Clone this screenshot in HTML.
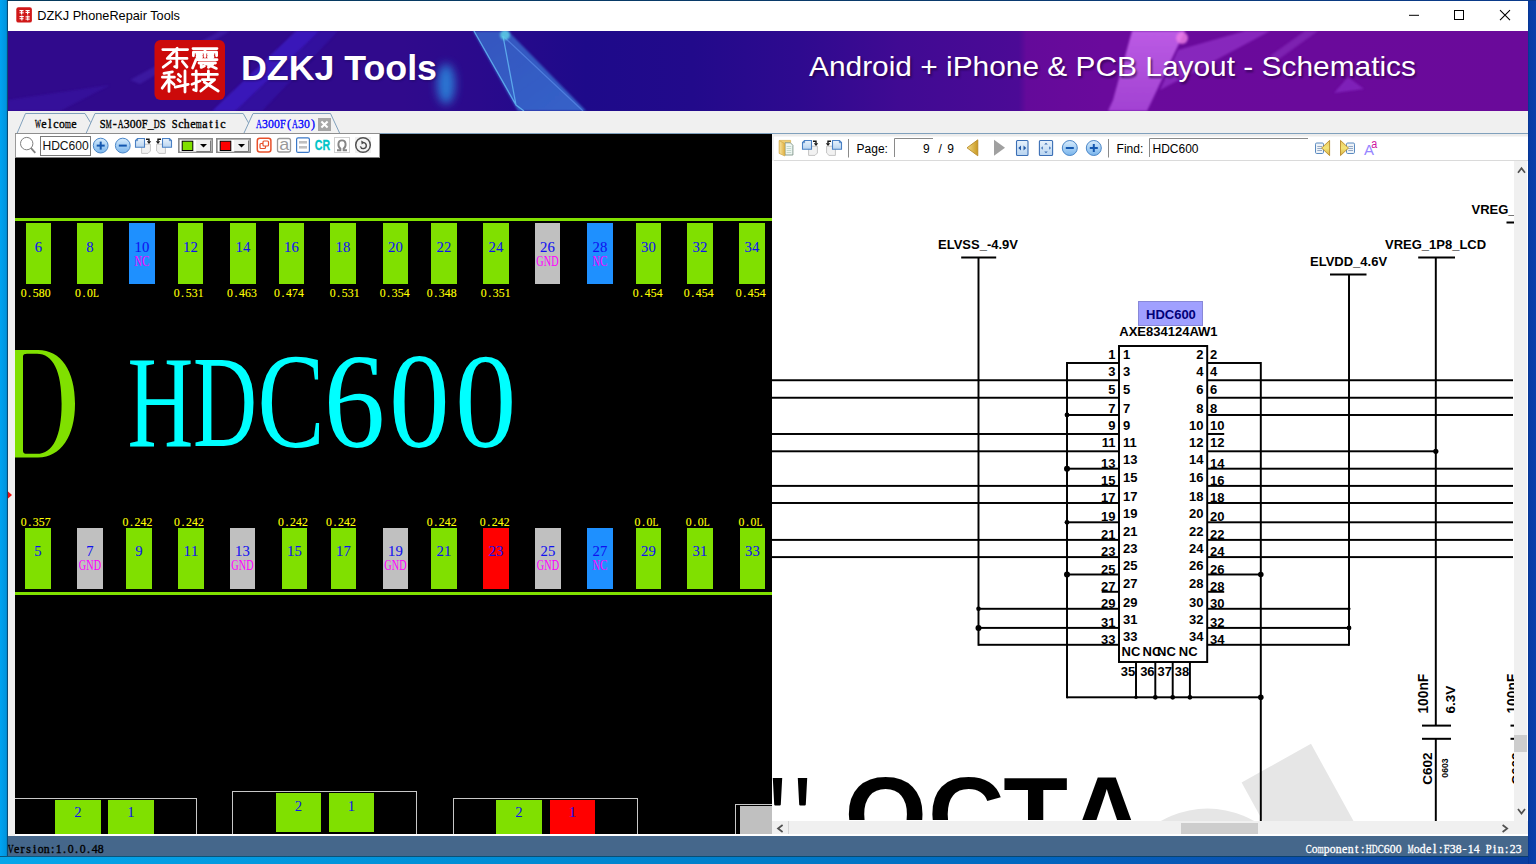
<!DOCTYPE html>
<html><head><meta charset="utf-8"><title>DZKJ</title><style>
*{box-sizing:border-box;margin:0;padding:0}
html,body{width:1536px;height:864px;overflow:hidden}
body{position:relative;background:#0a9be0;font-family:"Liberation Sans",sans-serif;}
.abs{position:absolute}
#desk-l{left:0;top:0;width:8px;height:864px;background:linear-gradient(90deg,#00a4f2 0%,#0094de 80%,#0a4a74 90%,#0a4a74 100%)}
#desk-b{left:0;top:856px;width:1536px;height:8px;background:linear-gradient(180deg,rgba(10,60,90,.75) 0,rgba(10,60,90,.75) 1.2px,rgba(0,0,0,0) 1.3px),linear-gradient(90deg,#06a6ea 0%,#008cd4 33%,#007cc8 50%,#0068c0 66%,#0a50b0 83%,#0a3ea0 100%)}
#desk-r{left:1528px;top:0;width:8px;height:864px;background:linear-gradient(90deg,#06348e 0,#083ca4 1.5px,#0a40ac 100%)}
#desk-t{left:7px;top:0;width:1529px;height:1px;background:linear-gradient(90deg,#043a5c 0%,#0a3a6c 60%,#0a3a8c 100%)}
#win{left:8px;top:1px;width:1520px;height:855.3px;background:#f0f0f0;overflow:hidden}
#title{left:0;top:0;width:1520px;height:30px;background:#fff}
#banner{left:0;top:30px;width:1520px;height:80px;background:linear-gradient(90deg,#300a8c 0%,#300a8c 26%,#2a0a8c 31%,#1e0a8a 38%,#220a8b 45%,#2e0a8f 52%,#400a93 58.7%,#4c0a96 66.5%,#640a9a 67%,#6a0a9c 72%,#6a0a9a 100%);overflow:hidden}
#tabs{left:0;top:110px;width:1520px;height:23px;background:#f0f0f0}
#lpane{left:7px;top:133px;width:757px;height:700px;background:#000;overflow:hidden}
#rpane{left:764px;top:133px;width:756px;height:700px;background:#fff;overflow:hidden}
#wline{left:7px;top:833px;width:1513px;height:2.4px;background:#fff}
#status{left:0;top:835.3px;width:1520px;height:20px;background:#45678b}
.sim{font-family:"Liberation Mono",monospace;white-space:pre;transform-origin:0 0;display:block;position:absolute}
</style></head><body>
<div id="desk-l" class="abs"></div><div id="desk-b" class="abs"></div><div id="desk-r" class="abs"></div><div id="desk-t" class="abs"></div>
<div id="win" class="abs">
<div id="title" class="abs"><svg class="abs" style="left:0;top:0" width="1520" height="30" viewBox="8 1 1520 30">
<rect x="16.3" y="7.2" width="15.6" height="15.4" rx="2.2" fill="#d01818"/>
<g fill="#fff"><rect x="19.5" y="10" width="4" height="1.2"/><rect x="21" y="10" width="1.2" height="4.5"/><rect x="19.5" y="12.3" width="4.3" height="1"/><rect x="25.5" y="10" width="4.2" height="1.2"/><rect x="25.5" y="12" width="4.2" height="1"/><rect x="27" y="10" width="1.2" height="4.5"/><rect x="19.5" y="16" width="4.3" height="1.1"/><rect x="21.3" y="15.5" width="1.1" height="5"/><rect x="19.5" y="18.2" width="4" height="1"/><rect x="25.5" y="16.3" width="4.3" height="1.1"/><rect x="27.2" y="15.5" width="1.1" height="5"/><rect x="25.5" y="18.6" width="4.3" height="1"/></g>
<text x="37.3" y="20.2" font-family="Liberation Sans" font-size="12.6" fill="#000" textLength="142.6" lengthAdjust="spacingAndGlyphs">DZKJ PhoneRepair Tools</text>
<rect x="1409" y="14.8" width="10" height="1" fill="#000"/>
<rect x="1454.5" y="10.5" width="9" height="9" fill="none" stroke="#000" stroke-width="1"/>
<path d="M1500 10.2 L1510 20.2 M1510 10.2 L1500 20.2" stroke="#000" stroke-width="1.1" fill="none"/>
</svg></div>
<div id="banner" class="abs"><svg class="abs" style="left:0;top:0" width="1520" height="80" viewBox="8 31 1520 80">
<defs><filter id="bl" x="-50%" y="-50%" width="200%" height="200%"><feGaussianBlur stdDeviation="5"/></filter><filter id="bl2" x="-50%" y="-50%" width="200%" height="200%"><feGaussianBlur stdDeviation="1.2"/></filter><linearGradient id="lg1" x1="0" y1="0" x2="1" y2="1"><stop offset="0" stop-color="#3a6fd0" stop-opacity="0.75"/><stop offset="1" stop-color="#3a78d8" stop-opacity="0.8"/></linearGradient><linearGradient id="lg2" x1="0" y1="0" x2="0" y2="1"><stop offset="0" stop-color="#c060e8" stop-opacity="0.95"/><stop offset="1" stop-color="#b050e0" stop-opacity="0.8"/></linearGradient></defs>
<polygon points="8,111 60,111 110,85 8,100" fill="#3a18a8" opacity="0.5" filter="url(#bl2)"/>
<polygon points="130,80 220,31 230,31 140,84" fill="#4a2ab8" opacity="0.45" filter="url(#bl2)"/>
<polygon points="212,111 236,111 320,31 296,31" fill="#3c1ec8" opacity="0.75" filter="url(#bl2)"/>
<polygon points="236,111 262,111 338,31 320,31" fill="#3414b0" opacity="0.5" filter="url(#bl2)"/>
<ellipse cx="446" cy="84" rx="9" ry="20" fill="#2a8ae0" opacity="0.85" filter="url(#bl)"/>
<polygon points="473,31 508,31 586,111 518,111" fill="url(#lg1)" filter="url(#bl2)"/>
<path d="M474 31 L516 105 L524 111 M503 36 L516 105" stroke="#5fb0f0" stroke-width="1.3" fill="none" opacity="0.9"/>
<path d="M503 36 L583 111" stroke="#5a8ae8" stroke-width="1.2" fill="none" opacity="0.7"/>
<circle cx="505" cy="35" r="5" fill="#60d8e8" opacity="0.8" filter="url(#bl2)"/>
<polygon points="1132,31 1185,31 1147,111 1108,111 1113,100" fill="url(#lg2)" filter="url(#bl2)"/>
<polygon points="1178,50 1245,31 1270,31 1160,90" fill="#a040d8" opacity="0.55" filter="url(#bl2)"/>
<polygon points="1270,56 1305,31 1318,31 1275,62" fill="#8a30c0" opacity="0.6" filter="url(#bl2)"/>
<polygon points="1334,93 1348,77 1364,89" fill="#8428c0" opacity="0.8" filter="url(#bl2)"/>
<circle cx="1182" cy="38" r="6" fill="#f080e8" opacity="0.8" filter="url(#bl2)"/>
<rect x="154.5" y="40" width="70.5" height="60" rx="6" fill="#cc0a0a"/>
<path d="M162.8 49.6 H187.6 M177.2 48.2 L167.3 58.4 H187 M176.8 52.5 V67.6 L174.6 66.6 M170.6 61.6 L163.2 67.2 M182.4 61.4 L187 67 M193 48.6 H217 M205 48.6 V56.6 M193.4 55.8 V52.2 H216.6 V55.8 M197 54.6 H201.6 M208.4 54.6 H213 M197 56.9 H201.6 M208.4 56.9 H213 M196 59.7 H217 M196 59.7 L192.6 68 M199 63 H215.5 M201.2 63 V67.4 L204.4 66 M205.6 63.4 L216.4 68.4 M212.6 64.6 L208.4 67.2 M164 73.4 L172.4 71.8 M162.4 77.2 H174.4 M169 72.6 V91.4 M168.8 79.2 L162.2 88.2 M169.6 80.4 L174 84.6 M178.4 74.2 L180.6 76.4 M178 79.4 L180.2 81.6 M175.2 87.2 L188.2 84.4 M185 71 V92 M192.4 74.4 H199.6 M196.2 71 V90.8 L193.6 89.8 M192 84.2 L200 81 M201.4 74.4 H217.4 M208.4 71 V79.4 M202.4 79.6 H214.6 L200.8 91 M204.2 82 L218.2 91" stroke="#fff" stroke-width="2.8" stroke-linecap="round" stroke-linejoin="round" fill="none"/>
<text x="242" y="81" font-family="Liberation Sans" font-weight="bold" font-size="35" fill="#1a0a50" opacity="0.6" textLength="196" lengthAdjust="spacingAndGlyphs" filter="url(#bl2)">DZKJ Tools</text>
<text x="241" y="80" font-family="Liberation Sans" font-weight="bold" font-size="35" fill="#fff" textLength="196" lengthAdjust="spacingAndGlyphs">DZKJ Tools</text>
<text x="810.5" y="77.5" font-family="Liberation Sans" font-size="28.5" fill="#20063a" opacity="0.7" textLength="607" lengthAdjust="spacingAndGlyphs" filter="url(#bl2)">Android + iPhone &amp; PCB Layout - Schematics</text>
<text x="809" y="76" font-family="Liberation Sans" font-size="28.5" fill="#fff" textLength="607" lengthAdjust="spacingAndGlyphs">Android + iPhone &amp; PCB Layout - Schematics</text>
</svg></div>
<div id="tabs" class="abs"><svg class="abs" style="left:0;top:0" width="1520" height="23" viewBox="8 111 1520 23">
<path d="M15 133.5 H1528" stroke="#80a0bc" stroke-width="1" fill="none"/>
<path d="M17 133.5 L25.5 113.5 H85 L90.5 122.5" stroke="#80a0bc" stroke-width="1" fill="none"/>
<path d="M86 133.5 L95 113.5 H243.2 L248.6 123" stroke="#80a0bc" stroke-width="1" fill="none"/>
<path d="M243.8 133.5 L253 113.5 H330.5 L339.8 133.5" stroke="#80a0bc" stroke-width="1" fill="#f2f2f2"/>
<path d="M15 133.5 H380" stroke="#8e8e8e" stroke-width="1" fill="none"/>
<g font-family="Liberation Serif" font-size="12" fill="#000" stroke="#000" stroke-width="0.35" ><text x="35.06" y="128" textLength="5.88" lengthAdjust="spacingAndGlyphs">W</text><text x="41.34" y="128">e</text><text x="48.33" y="128">l</text><text x="53.34" y="128">c</text><text x="59.06" y="128" textLength="5.88" lengthAdjust="spacingAndGlyphs">o</text><text x="65.06" y="128" textLength="5.88" lengthAdjust="spacingAndGlyphs">m</text><text x="71.34" y="128">e</text></g>
<g font-family="Liberation Serif" font-size="12" fill="#000" stroke="#000" stroke-width="0.35" ><text x="99.86" y="128" textLength="5.88" lengthAdjust="spacingAndGlyphs">S</text><text x="105.86" y="128" textLength="5.88" lengthAdjust="spacingAndGlyphs">M</text><text x="112.80" y="128">-</text><text x="117.86" y="128" textLength="5.88" lengthAdjust="spacingAndGlyphs">A</text><text x="123.86" y="128" textLength="5.88" lengthAdjust="spacingAndGlyphs">3</text><text x="129.86" y="128" textLength="5.88" lengthAdjust="spacingAndGlyphs">0</text><text x="135.86" y="128" textLength="5.88" lengthAdjust="spacingAndGlyphs">0</text><text x="141.86" y="128" textLength="5.88" lengthAdjust="spacingAndGlyphs">F</text><text x="147.86" y="128" textLength="5.88" lengthAdjust="spacingAndGlyphs">_</text><text x="153.86" y="128" textLength="5.88" lengthAdjust="spacingAndGlyphs">D</text><text x="159.86" y="128" textLength="5.88" lengthAdjust="spacingAndGlyphs">S</text><text x="171.86" y="128" textLength="5.88" lengthAdjust="spacingAndGlyphs">S</text><text x="178.14" y="128">c</text><text x="183.86" y="128" textLength="5.88" lengthAdjust="spacingAndGlyphs">h</text><text x="190.14" y="128">e</text><text x="195.86" y="128" textLength="5.88" lengthAdjust="spacingAndGlyphs">m</text><text x="202.14" y="128">a</text><text x="209.13" y="128">t</text><text x="215.13" y="128">i</text><text x="220.14" y="128">c</text></g>
<g font-family="Liberation Serif" font-size="12" fill="#0000ff" stroke="#0000ff" stroke-width="0.3" ><text x="256.06" y="128" textLength="5.88" lengthAdjust="spacingAndGlyphs">A</text><text x="262.06" y="128" textLength="5.88" lengthAdjust="spacingAndGlyphs">3</text><text x="268.06" y="128" textLength="5.88" lengthAdjust="spacingAndGlyphs">0</text><text x="274.06" y="128" textLength="5.88" lengthAdjust="spacingAndGlyphs">0</text><text x="280.06" y="128" textLength="5.88" lengthAdjust="spacingAndGlyphs">F</text><text x="287.00" y="128">(</text><text x="292.06" y="128" textLength="5.88" lengthAdjust="spacingAndGlyphs">A</text><text x="298.06" y="128" textLength="5.88" lengthAdjust="spacingAndGlyphs">3</text><text x="304.06" y="128" textLength="5.88" lengthAdjust="spacingAndGlyphs">0</text><text x="311.00" y="128">)</text></g>
<rect x="318" y="118" width="13" height="13" fill="#a6a6a6"/>
<path d="M321.4 121.6 L327.6 127.6 M327.6 121.6 L321.4 127.6" stroke="#fff" stroke-width="2.1" fill="none"/>
</svg></div>
<div id="lpane" class="abs"><svg class="abs" style="left:0;top:0" width="757" height="701" viewBox="15 134 757 701">
<rect x="15" y="218" width="757" height="3" fill="#80e000"/>
<rect x="15" y="592" width="757" height="3" fill="#80e000"/>
<rect x="26" y="223" width="25" height="61" fill="#80e000"/>
<g font-family="Liberation Serif" font-size="15" fill="#1010f0" stroke="#1010f0" stroke-width="0.08" ><text x="34.83" y="252" textLength="7.35" lengthAdjust="spacingAndGlyphs">6</text></g>
<g font-family="Liberation Serif" font-size="12" fill="#ffff00" stroke="#ffff00" stroke-width="0.12" ><text x="20.66" y="297" textLength="5.88" lengthAdjust="spacingAndGlyphs">0</text><text x="28.10" y="297">.</text><text x="32.66" y="297" textLength="5.88" lengthAdjust="spacingAndGlyphs">5</text><text x="38.66" y="297" textLength="5.88" lengthAdjust="spacingAndGlyphs">8</text><text x="44.66" y="297" textLength="5.88" lengthAdjust="spacingAndGlyphs">0</text></g>
<rect x="77" y="223" width="26" height="61" fill="#80e000"/>
<g font-family="Liberation Serif" font-size="15" fill="#1010f0" stroke="#1010f0" stroke-width="0.08" ><text x="86.33" y="252" textLength="7.35" lengthAdjust="spacingAndGlyphs">8</text></g>
<g font-family="Liberation Serif" font-size="12" fill="#ffff00" stroke="#ffff00" stroke-width="0.12" ><text x="75.06" y="297" textLength="5.88" lengthAdjust="spacingAndGlyphs">0</text><text x="82.50" y="297">.</text><text x="87.06" y="297" textLength="5.88" lengthAdjust="spacingAndGlyphs">0</text><text x="93.06" y="297" textLength="5.88" lengthAdjust="spacingAndGlyphs">L</text></g>
<rect x="129" y="223" width="26" height="61" fill="#1e90ff"/>
<g font-family="Liberation Serif" font-size="15" fill="#1010f0" stroke="#1010f0" stroke-width="0.08" ><text x="134.57" y="252" textLength="7.35" lengthAdjust="spacingAndGlyphs">1</text><text x="142.07" y="252" textLength="7.35" lengthAdjust="spacingAndGlyphs">0</text></g>
<g font-family="Liberation Serif" font-size="15" fill="#ff00ff" stroke="#ff00ff" stroke-width="0.08" ><text x="134.57" y="266" textLength="7.35" lengthAdjust="spacingAndGlyphs">N</text><text x="142.07" y="266" textLength="7.35" lengthAdjust="spacingAndGlyphs">C</text></g>
<rect x="178" y="223" width="25" height="61" fill="#80e000"/>
<g font-family="Liberation Serif" font-size="15" fill="#1010f0" stroke="#1010f0" stroke-width="0.08" ><text x="183.07" y="252" textLength="7.35" lengthAdjust="spacingAndGlyphs">1</text><text x="190.57" y="252" textLength="7.35" lengthAdjust="spacingAndGlyphs">2</text></g>
<g font-family="Liberation Serif" font-size="12" fill="#ffff00" stroke="#ffff00" stroke-width="0.12" ><text x="173.66" y="297" textLength="5.88" lengthAdjust="spacingAndGlyphs">0</text><text x="181.10" y="297">.</text><text x="185.66" y="297" textLength="5.88" lengthAdjust="spacingAndGlyphs">5</text><text x="191.66" y="297" textLength="5.88" lengthAdjust="spacingAndGlyphs">3</text><text x="197.66" y="297" textLength="5.88" lengthAdjust="spacingAndGlyphs">1</text></g>
<rect x="230" y="223" width="26" height="61" fill="#80e000"/>
<g font-family="Liberation Serif" font-size="15" fill="#1010f0" stroke="#1010f0" stroke-width="0.08" ><text x="235.57" y="252" textLength="7.35" lengthAdjust="spacingAndGlyphs">1</text><text x="243.07" y="252" textLength="7.35" lengthAdjust="spacingAndGlyphs">4</text></g>
<g font-family="Liberation Serif" font-size="12" fill="#ffff00" stroke="#ffff00" stroke-width="0.12" ><text x="227.06" y="297" textLength="5.88" lengthAdjust="spacingAndGlyphs">0</text><text x="234.50" y="297">.</text><text x="239.06" y="297" textLength="5.88" lengthAdjust="spacingAndGlyphs">4</text><text x="245.06" y="297" textLength="5.88" lengthAdjust="spacingAndGlyphs">6</text><text x="251.06" y="297" textLength="5.88" lengthAdjust="spacingAndGlyphs">3</text></g>
<rect x="279" y="223" width="25" height="61" fill="#80e000"/>
<g font-family="Liberation Serif" font-size="15" fill="#1010f0" stroke="#1010f0" stroke-width="0.08" ><text x="284.07" y="252" textLength="7.35" lengthAdjust="spacingAndGlyphs">1</text><text x="291.57" y="252" textLength="7.35" lengthAdjust="spacingAndGlyphs">6</text></g>
<g font-family="Liberation Serif" font-size="12" fill="#ffff00" stroke="#ffff00" stroke-width="0.12" ><text x="274.06" y="297" textLength="5.88" lengthAdjust="spacingAndGlyphs">0</text><text x="281.50" y="297">.</text><text x="286.06" y="297" textLength="5.88" lengthAdjust="spacingAndGlyphs">4</text><text x="292.06" y="297" textLength="5.88" lengthAdjust="spacingAndGlyphs">7</text><text x="298.06" y="297" textLength="5.88" lengthAdjust="spacingAndGlyphs">4</text></g>
<rect x="330" y="223" width="26" height="61" fill="#80e000"/>
<g font-family="Liberation Serif" font-size="15" fill="#1010f0" stroke="#1010f0" stroke-width="0.08" ><text x="335.57" y="252" textLength="7.35" lengthAdjust="spacingAndGlyphs">1</text><text x="343.07" y="252" textLength="7.35" lengthAdjust="spacingAndGlyphs">8</text></g>
<g font-family="Liberation Serif" font-size="12" fill="#ffff00" stroke="#ffff00" stroke-width="0.12" ><text x="329.66" y="297" textLength="5.88" lengthAdjust="spacingAndGlyphs">0</text><text x="337.10" y="297">.</text><text x="341.66" y="297" textLength="5.88" lengthAdjust="spacingAndGlyphs">5</text><text x="347.66" y="297" textLength="5.88" lengthAdjust="spacingAndGlyphs">3</text><text x="353.66" y="297" textLength="5.88" lengthAdjust="spacingAndGlyphs">1</text></g>
<rect x="383" y="223" width="25" height="61" fill="#80e000"/>
<g font-family="Liberation Serif" font-size="15" fill="#1010f0" stroke="#1010f0" stroke-width="0.08" ><text x="388.07" y="252" textLength="7.35" lengthAdjust="spacingAndGlyphs">2</text><text x="395.57" y="252" textLength="7.35" lengthAdjust="spacingAndGlyphs">0</text></g>
<g font-family="Liberation Serif" font-size="12" fill="#ffff00" stroke="#ffff00" stroke-width="0.12" ><text x="379.66" y="297" textLength="5.88" lengthAdjust="spacingAndGlyphs">0</text><text x="387.10" y="297">.</text><text x="391.66" y="297" textLength="5.88" lengthAdjust="spacingAndGlyphs">3</text><text x="397.66" y="297" textLength="5.88" lengthAdjust="spacingAndGlyphs">5</text><text x="403.66" y="297" textLength="5.88" lengthAdjust="spacingAndGlyphs">4</text></g>
<rect x="431" y="223" width="26" height="61" fill="#80e000"/>
<g font-family="Liberation Serif" font-size="15" fill="#1010f0" stroke="#1010f0" stroke-width="0.08" ><text x="436.57" y="252" textLength="7.35" lengthAdjust="spacingAndGlyphs">2</text><text x="444.07" y="252" textLength="7.35" lengthAdjust="spacingAndGlyphs">2</text></g>
<g font-family="Liberation Serif" font-size="12" fill="#ffff00" stroke="#ffff00" stroke-width="0.12" ><text x="426.76" y="297" textLength="5.88" lengthAdjust="spacingAndGlyphs">0</text><text x="434.20" y="297">.</text><text x="438.76" y="297" textLength="5.88" lengthAdjust="spacingAndGlyphs">3</text><text x="444.76" y="297" textLength="5.88" lengthAdjust="spacingAndGlyphs">4</text><text x="450.76" y="297" textLength="5.88" lengthAdjust="spacingAndGlyphs">8</text></g>
<rect x="483" y="223" width="26" height="61" fill="#80e000"/>
<g font-family="Liberation Serif" font-size="15" fill="#1010f0" stroke="#1010f0" stroke-width="0.08" ><text x="488.57" y="252" textLength="7.35" lengthAdjust="spacingAndGlyphs">2</text><text x="496.07" y="252" textLength="7.35" lengthAdjust="spacingAndGlyphs">4</text></g>
<g font-family="Liberation Serif" font-size="12" fill="#ffff00" stroke="#ffff00" stroke-width="0.12" ><text x="480.86" y="297" textLength="5.88" lengthAdjust="spacingAndGlyphs">0</text><text x="488.30" y="297">.</text><text x="492.86" y="297" textLength="5.88" lengthAdjust="spacingAndGlyphs">3</text><text x="498.86" y="297" textLength="5.88" lengthAdjust="spacingAndGlyphs">5</text><text x="504.86" y="297" textLength="5.88" lengthAdjust="spacingAndGlyphs">1</text></g>
<rect x="535" y="223" width="25" height="61" fill="#c0c0c0"/>
<g font-family="Liberation Serif" font-size="15" fill="#1010f0" stroke="#1010f0" stroke-width="0.08" ><text x="540.08" y="252" textLength="7.35" lengthAdjust="spacingAndGlyphs">2</text><text x="547.58" y="252" textLength="7.35" lengthAdjust="spacingAndGlyphs">6</text></g>
<g font-family="Liberation Serif" font-size="15" fill="#ff00ff" stroke="#ff00ff" stroke-width="0.08" ><text x="536.33" y="266" textLength="7.35" lengthAdjust="spacingAndGlyphs">G</text><text x="543.83" y="266" textLength="7.35" lengthAdjust="spacingAndGlyphs">N</text><text x="551.33" y="266" textLength="7.35" lengthAdjust="spacingAndGlyphs">D</text></g>
<rect x="587" y="223" width="26" height="61" fill="#1e90ff"/>
<g font-family="Liberation Serif" font-size="15" fill="#1010f0" stroke="#1010f0" stroke-width="0.08" ><text x="592.58" y="252" textLength="7.35" lengthAdjust="spacingAndGlyphs">2</text><text x="600.08" y="252" textLength="7.35" lengthAdjust="spacingAndGlyphs">8</text></g>
<g font-family="Liberation Serif" font-size="15" fill="#ff00ff" stroke="#ff00ff" stroke-width="0.08" ><text x="592.58" y="266" textLength="7.35" lengthAdjust="spacingAndGlyphs">N</text><text x="600.08" y="266" textLength="7.35" lengthAdjust="spacingAndGlyphs">C</text></g>
<rect x="636" y="223" width="25" height="61" fill="#80e000"/>
<g font-family="Liberation Serif" font-size="15" fill="#1010f0" stroke="#1010f0" stroke-width="0.08" ><text x="641.08" y="252" textLength="7.35" lengthAdjust="spacingAndGlyphs">3</text><text x="648.58" y="252" textLength="7.35" lengthAdjust="spacingAndGlyphs">0</text></g>
<g font-family="Liberation Serif" font-size="12" fill="#ffff00" stroke="#ffff00" stroke-width="0.12" ><text x="632.66" y="297" textLength="5.88" lengthAdjust="spacingAndGlyphs">0</text><text x="640.10" y="297">.</text><text x="644.66" y="297" textLength="5.88" lengthAdjust="spacingAndGlyphs">4</text><text x="650.66" y="297" textLength="5.88" lengthAdjust="spacingAndGlyphs">5</text><text x="656.66" y="297" textLength="5.88" lengthAdjust="spacingAndGlyphs">4</text></g>
<rect x="687" y="223" width="26" height="61" fill="#80e000"/>
<g font-family="Liberation Serif" font-size="15" fill="#1010f0" stroke="#1010f0" stroke-width="0.08" ><text x="692.58" y="252" textLength="7.35" lengthAdjust="spacingAndGlyphs">3</text><text x="700.08" y="252" textLength="7.35" lengthAdjust="spacingAndGlyphs">2</text></g>
<g font-family="Liberation Serif" font-size="12" fill="#ffff00" stroke="#ffff00" stroke-width="0.12" ><text x="683.86" y="297" textLength="5.88" lengthAdjust="spacingAndGlyphs">0</text><text x="691.30" y="297">.</text><text x="695.86" y="297" textLength="5.88" lengthAdjust="spacingAndGlyphs">4</text><text x="701.86" y="297" textLength="5.88" lengthAdjust="spacingAndGlyphs">5</text><text x="707.86" y="297" textLength="5.88" lengthAdjust="spacingAndGlyphs">4</text></g>
<rect x="739" y="223" width="26" height="61" fill="#80e000"/>
<g font-family="Liberation Serif" font-size="15" fill="#1010f0" stroke="#1010f0" stroke-width="0.08" ><text x="744.58" y="252" textLength="7.35" lengthAdjust="spacingAndGlyphs">3</text><text x="752.08" y="252" textLength="7.35" lengthAdjust="spacingAndGlyphs">4</text></g>
<g font-family="Liberation Serif" font-size="12" fill="#ffff00" stroke="#ffff00" stroke-width="0.12" ><text x="735.76" y="297" textLength="5.88" lengthAdjust="spacingAndGlyphs">0</text><text x="743.20" y="297">.</text><text x="747.76" y="297" textLength="5.88" lengthAdjust="spacingAndGlyphs">4</text><text x="753.76" y="297" textLength="5.88" lengthAdjust="spacingAndGlyphs">5</text><text x="759.76" y="297" textLength="5.88" lengthAdjust="spacingAndGlyphs">4</text></g>
<rect x="25" y="528" width="26" height="61" fill="#80e000"/>
<g font-family="Liberation Serif" font-size="15" fill="#1010f0" stroke="#1010f0" stroke-width="0.08" ><text x="34.33" y="556" textLength="7.35" lengthAdjust="spacingAndGlyphs">5</text></g>
<g font-family="Liberation Serif" font-size="12" fill="#ffff00" stroke="#ffff00" stroke-width="0.12" ><text x="20.86" y="526" textLength="5.88" lengthAdjust="spacingAndGlyphs">0</text><text x="28.30" y="526">.</text><text x="32.86" y="526" textLength="5.88" lengthAdjust="spacingAndGlyphs">3</text><text x="38.86" y="526" textLength="5.88" lengthAdjust="spacingAndGlyphs">5</text><text x="44.86" y="526" textLength="5.88" lengthAdjust="spacingAndGlyphs">7</text></g>
<rect x="77" y="528" width="26" height="61" fill="#c0c0c0"/>
<g font-family="Liberation Serif" font-size="15" fill="#1010f0" stroke="#1010f0" stroke-width="0.08" ><text x="86.33" y="556" textLength="7.35" lengthAdjust="spacingAndGlyphs">7</text></g>
<g font-family="Liberation Serif" font-size="15" fill="#ff00ff" stroke="#ff00ff" stroke-width="0.08" ><text x="78.83" y="570" textLength="7.35" lengthAdjust="spacingAndGlyphs">G</text><text x="86.33" y="570" textLength="7.35" lengthAdjust="spacingAndGlyphs">N</text><text x="93.83" y="570" textLength="7.35" lengthAdjust="spacingAndGlyphs">D</text></g>
<rect x="126" y="528" width="26" height="61" fill="#80e000"/>
<g font-family="Liberation Serif" font-size="15" fill="#1010f0" stroke="#1010f0" stroke-width="0.08" ><text x="135.32" y="556" textLength="7.35" lengthAdjust="spacingAndGlyphs">9</text></g>
<g font-family="Liberation Serif" font-size="12" fill="#ffff00" stroke="#ffff00" stroke-width="0.12" ><text x="122.46" y="526" textLength="5.88" lengthAdjust="spacingAndGlyphs">0</text><text x="129.90" y="526">.</text><text x="134.46" y="526" textLength="5.88" lengthAdjust="spacingAndGlyphs">2</text><text x="140.46" y="526" textLength="5.88" lengthAdjust="spacingAndGlyphs">4</text><text x="146.46" y="526" textLength="5.88" lengthAdjust="spacingAndGlyphs">2</text></g>
<rect x="178" y="528" width="26" height="61" fill="#80e000"/>
<g font-family="Liberation Serif" font-size="15" fill="#1010f0" stroke="#1010f0" stroke-width="0.08" ><text x="183.57" y="556" textLength="7.35" lengthAdjust="spacingAndGlyphs">1</text><text x="191.07" y="556" textLength="7.35" lengthAdjust="spacingAndGlyphs">1</text></g>
<g font-family="Liberation Serif" font-size="12" fill="#ffff00" stroke="#ffff00" stroke-width="0.12" ><text x="174.06" y="526" textLength="5.88" lengthAdjust="spacingAndGlyphs">0</text><text x="181.50" y="526">.</text><text x="186.06" y="526" textLength="5.88" lengthAdjust="spacingAndGlyphs">2</text><text x="192.06" y="526" textLength="5.88" lengthAdjust="spacingAndGlyphs">4</text><text x="198.06" y="526" textLength="5.88" lengthAdjust="spacingAndGlyphs">2</text></g>
<rect x="230" y="528" width="25" height="61" fill="#c0c0c0"/>
<g font-family="Liberation Serif" font-size="15" fill="#1010f0" stroke="#1010f0" stroke-width="0.08" ><text x="235.07" y="556" textLength="7.35" lengthAdjust="spacingAndGlyphs">1</text><text x="242.57" y="556" textLength="7.35" lengthAdjust="spacingAndGlyphs">3</text></g>
<g font-family="Liberation Serif" font-size="15" fill="#ff00ff" stroke="#ff00ff" stroke-width="0.08" ><text x="231.32" y="570" textLength="7.35" lengthAdjust="spacingAndGlyphs">G</text><text x="238.82" y="570" textLength="7.35" lengthAdjust="spacingAndGlyphs">N</text><text x="246.32" y="570" textLength="7.35" lengthAdjust="spacingAndGlyphs">D</text></g>
<rect x="282" y="528" width="25" height="61" fill="#80e000"/>
<g font-family="Liberation Serif" font-size="15" fill="#1010f0" stroke="#1010f0" stroke-width="0.08" ><text x="287.07" y="556" textLength="7.35" lengthAdjust="spacingAndGlyphs">1</text><text x="294.57" y="556" textLength="7.35" lengthAdjust="spacingAndGlyphs">5</text></g>
<g font-family="Liberation Serif" font-size="12" fill="#ffff00" stroke="#ffff00" stroke-width="0.12" ><text x="278.06" y="526" textLength="5.88" lengthAdjust="spacingAndGlyphs">0</text><text x="285.50" y="526">.</text><text x="290.06" y="526" textLength="5.88" lengthAdjust="spacingAndGlyphs">2</text><text x="296.06" y="526" textLength="5.88" lengthAdjust="spacingAndGlyphs">4</text><text x="302.06" y="526" textLength="5.88" lengthAdjust="spacingAndGlyphs">2</text></g>
<rect x="331" y="528" width="25" height="61" fill="#80e000"/>
<g font-family="Liberation Serif" font-size="15" fill="#1010f0" stroke="#1010f0" stroke-width="0.08" ><text x="336.07" y="556" textLength="7.35" lengthAdjust="spacingAndGlyphs">1</text><text x="343.57" y="556" textLength="7.35" lengthAdjust="spacingAndGlyphs">7</text></g>
<g font-family="Liberation Serif" font-size="12" fill="#ffff00" stroke="#ffff00" stroke-width="0.12" ><text x="326.06" y="526" textLength="5.88" lengthAdjust="spacingAndGlyphs">0</text><text x="333.50" y="526">.</text><text x="338.06" y="526" textLength="5.88" lengthAdjust="spacingAndGlyphs">2</text><text x="344.06" y="526" textLength="5.88" lengthAdjust="spacingAndGlyphs">4</text><text x="350.06" y="526" textLength="5.88" lengthAdjust="spacingAndGlyphs">2</text></g>
<rect x="383" y="528" width="25" height="61" fill="#c0c0c0"/>
<g font-family="Liberation Serif" font-size="15" fill="#1010f0" stroke="#1010f0" stroke-width="0.08" ><text x="388.07" y="556" textLength="7.35" lengthAdjust="spacingAndGlyphs">1</text><text x="395.57" y="556" textLength="7.35" lengthAdjust="spacingAndGlyphs">9</text></g>
<g font-family="Liberation Serif" font-size="15" fill="#ff00ff" stroke="#ff00ff" stroke-width="0.08" ><text x="384.32" y="570" textLength="7.35" lengthAdjust="spacingAndGlyphs">G</text><text x="391.82" y="570" textLength="7.35" lengthAdjust="spacingAndGlyphs">N</text><text x="399.32" y="570" textLength="7.35" lengthAdjust="spacingAndGlyphs">D</text></g>
<rect x="431" y="528" width="26" height="61" fill="#80e000"/>
<g font-family="Liberation Serif" font-size="15" fill="#1010f0" stroke="#1010f0" stroke-width="0.08" ><text x="436.57" y="556" textLength="7.35" lengthAdjust="spacingAndGlyphs">2</text><text x="444.07" y="556" textLength="7.35" lengthAdjust="spacingAndGlyphs">1</text></g>
<g font-family="Liberation Serif" font-size="12" fill="#ffff00" stroke="#ffff00" stroke-width="0.12" ><text x="426.76" y="526" textLength="5.88" lengthAdjust="spacingAndGlyphs">0</text><text x="434.20" y="526">.</text><text x="438.76" y="526" textLength="5.88" lengthAdjust="spacingAndGlyphs">2</text><text x="444.76" y="526" textLength="5.88" lengthAdjust="spacingAndGlyphs">4</text><text x="450.76" y="526" textLength="5.88" lengthAdjust="spacingAndGlyphs">2</text></g>
<rect x="483" y="528" width="26" height="61" fill="#ff0000"/>
<g font-family="Liberation Serif" font-size="15" fill="#1010f0" stroke="#1010f0" stroke-width="0.08" ><text x="488.57" y="556" textLength="7.35" lengthAdjust="spacingAndGlyphs">2</text><text x="496.07" y="556" textLength="7.35" lengthAdjust="spacingAndGlyphs">3</text></g>
<g font-family="Liberation Serif" font-size="12" fill="#ffff00" stroke="#ffff00" stroke-width="0.12" ><text x="479.76" y="526" textLength="5.88" lengthAdjust="spacingAndGlyphs">0</text><text x="487.20" y="526">.</text><text x="491.76" y="526" textLength="5.88" lengthAdjust="spacingAndGlyphs">2</text><text x="497.76" y="526" textLength="5.88" lengthAdjust="spacingAndGlyphs">4</text><text x="503.76" y="526" textLength="5.88" lengthAdjust="spacingAndGlyphs">2</text></g>
<rect x="535" y="528" width="26" height="61" fill="#c0c0c0"/>
<g font-family="Liberation Serif" font-size="15" fill="#1010f0" stroke="#1010f0" stroke-width="0.08" ><text x="540.58" y="556" textLength="7.35" lengthAdjust="spacingAndGlyphs">2</text><text x="548.08" y="556" textLength="7.35" lengthAdjust="spacingAndGlyphs">5</text></g>
<g font-family="Liberation Serif" font-size="15" fill="#ff00ff" stroke="#ff00ff" stroke-width="0.08" ><text x="536.83" y="570" textLength="7.35" lengthAdjust="spacingAndGlyphs">G</text><text x="544.33" y="570" textLength="7.35" lengthAdjust="spacingAndGlyphs">N</text><text x="551.83" y="570" textLength="7.35" lengthAdjust="spacingAndGlyphs">D</text></g>
<rect x="587" y="528" width="26" height="61" fill="#1e90ff"/>
<g font-family="Liberation Serif" font-size="15" fill="#1010f0" stroke="#1010f0" stroke-width="0.08" ><text x="592.58" y="556" textLength="7.35" lengthAdjust="spacingAndGlyphs">2</text><text x="600.08" y="556" textLength="7.35" lengthAdjust="spacingAndGlyphs">7</text></g>
<g font-family="Liberation Serif" font-size="15" fill="#ff00ff" stroke="#ff00ff" stroke-width="0.08" ><text x="592.58" y="570" textLength="7.35" lengthAdjust="spacingAndGlyphs">N</text><text x="600.08" y="570" textLength="7.35" lengthAdjust="spacingAndGlyphs">C</text></g>
<rect x="636" y="528" width="25" height="61" fill="#80e000"/>
<g font-family="Liberation Serif" font-size="15" fill="#1010f0" stroke="#1010f0" stroke-width="0.08" ><text x="641.08" y="556" textLength="7.35" lengthAdjust="spacingAndGlyphs">2</text><text x="648.58" y="556" textLength="7.35" lengthAdjust="spacingAndGlyphs">9</text></g>
<g font-family="Liberation Serif" font-size="12" fill="#ffff00" stroke="#ffff00" stroke-width="0.12" ><text x="634.56" y="526" textLength="5.88" lengthAdjust="spacingAndGlyphs">0</text><text x="642.00" y="526">.</text><text x="646.56" y="526" textLength="5.88" lengthAdjust="spacingAndGlyphs">0</text><text x="652.56" y="526" textLength="5.88" lengthAdjust="spacingAndGlyphs">L</text></g>
<rect x="687" y="528" width="26" height="61" fill="#80e000"/>
<g font-family="Liberation Serif" font-size="15" fill="#1010f0" stroke="#1010f0" stroke-width="0.08" ><text x="692.58" y="556" textLength="7.35" lengthAdjust="spacingAndGlyphs">3</text><text x="700.08" y="556" textLength="7.35" lengthAdjust="spacingAndGlyphs">1</text></g>
<g font-family="Liberation Serif" font-size="12" fill="#ffff00" stroke="#ffff00" stroke-width="0.12" ><text x="685.76" y="526" textLength="5.88" lengthAdjust="spacingAndGlyphs">0</text><text x="693.20" y="526">.</text><text x="697.76" y="526" textLength="5.88" lengthAdjust="spacingAndGlyphs">0</text><text x="703.76" y="526" textLength="5.88" lengthAdjust="spacingAndGlyphs">L</text></g>
<rect x="740" y="528" width="25" height="61" fill="#80e000"/>
<g font-family="Liberation Serif" font-size="15" fill="#1010f0" stroke="#1010f0" stroke-width="0.08" ><text x="745.08" y="556" textLength="7.35" lengthAdjust="spacingAndGlyphs">3</text><text x="752.58" y="556" textLength="7.35" lengthAdjust="spacingAndGlyphs">3</text></g>
<g font-family="Liberation Serif" font-size="12" fill="#ffff00" stroke="#ffff00" stroke-width="0.12" ><text x="738.46" y="526" textLength="5.88" lengthAdjust="spacingAndGlyphs">0</text><text x="745.90" y="526">.</text><text x="750.46" y="526" textLength="5.88" lengthAdjust="spacingAndGlyphs">0</text><text x="756.46" y="526" textLength="5.88" lengthAdjust="spacingAndGlyphs">L</text></g>
<path fill-rule="evenodd" fill="#80e000" d="M15 350 H38 C61 350 75 371 75 403.7 C75 436 61 457.4 38 457.4 H15 Z M23 356.5 C23 354.5 24.5 353.8 27 353.8 H37 C53 353.8 61.6 371 61.6 403.7 C61.6 436 53 453.8 37 453.8 H27 C24.5 453.8 23 453 23 451 Z"/>
<text transform="translate(127.47 446) scale(0.6920 1)" font-family="Liberation Serif" font-size="131.60" fill="#00ffff">H</text>
<text transform="translate(192.94 446) scale(0.6734 1)" font-family="Liberation Serif" font-size="131.60" fill="#00ffff">D</text>
<text transform="translate(257.57 447.4) scale(0.7411 1)" font-family="Liberation Serif" font-size="135.89" fill="#00ffff">C</text>
<text transform="translate(323.79 447.4) scale(0.9036 1)" font-family="Liberation Serif" font-size="135.89" fill="#00ffff">6</text>
<text transform="translate(388.94 447.4) scale(0.8936 1)" font-family="Liberation Serif" font-size="135.89" fill="#00ffff">0</text>
<text transform="translate(455.09 447.4) scale(0.9041 1)" font-family="Liberation Serif" font-size="135.89" fill="#00ffff">0</text>
<rect x="14.5" y="798.5" width="182" height="50" fill="none" stroke="#c8c8c8" stroke-width="1"/>
<rect x="55" y="800" width="46" height="40" fill="#80e000"/><rect x="108" y="800" width="46" height="40" fill="#80e000"/>
<g font-family="Liberation Serif" font-size="15" fill="#1010f0" ><text x="74.33" y="817" textLength="7.35" lengthAdjust="spacingAndGlyphs">2</text></g>
<g font-family="Liberation Serif" font-size="15" fill="#1010f0" ><text x="127.33" y="817" textLength="7.35" lengthAdjust="spacingAndGlyphs">1</text></g>
<rect x="232.5" y="791.5" width="184" height="50" fill="none" stroke="#c8c8c8" stroke-width="1"/>
<rect x="276" y="793" width="45" height="39" fill="#80e000"/><rect x="329" y="793" width="45" height="39" fill="#80e000"/>
<g font-family="Liberation Serif" font-size="15" fill="#1010f0" ><text x="294.82" y="811" textLength="7.35" lengthAdjust="spacingAndGlyphs">2</text></g>
<g font-family="Liberation Serif" font-size="15" fill="#1010f0" ><text x="347.82" y="811" textLength="7.35" lengthAdjust="spacingAndGlyphs">1</text></g>
<rect x="453.5" y="798.5" width="184" height="50" fill="none" stroke="#c8c8c8" stroke-width="1"/>
<rect x="496" y="800" width="46" height="40" fill="#80e000"/><rect x="550" y="800" width="45" height="40" fill="#ff0000"/>
<g font-family="Liberation Serif" font-size="15" fill="#1010f0" ><text x="515.33" y="817" textLength="7.35" lengthAdjust="spacingAndGlyphs">2</text></g>
<g font-family="Liberation Serif" font-size="15" fill="#1010f0" ><text x="568.83" y="817" textLength="7.35" lengthAdjust="spacingAndGlyphs">1</text></g>
<rect x="735.5" y="804.5" width="60" height="50" fill="none" stroke="#c8c8c8" stroke-width="1"/>
<rect x="740" y="806" width="40" height="40" fill="#c0c0c0"/>
</svg><svg class="abs" style="left:0;top:-1px" width="366" height="25" viewBox="15 133 366 25">
<defs><linearGradient id="bb" x1="0" y1="0" x2="0" y2="1"><stop offset="0" stop-color="#d8ecfc"/><stop offset="0.5" stop-color="#a8d0f4"/><stop offset="1" stop-color="#78b4ec"/></linearGradient><linearGradient id="pg" x1="0" y1="0" x2="0" y2="1"><stop offset="0" stop-color="#e8f2fc"/><stop offset="1" stop-color="#b8d4f0"/></linearGradient></defs>
<rect x="15" y="133" width="365" height="24.5" fill="#fff"/>
<path d="M15.5 157.5 V133.5 H379.5 V157.5" stroke="#9a9a9a" stroke-width="1" fill="none"/>
<circle cx="26.7" cy="143.6" r="6.2" fill="none" stroke="#808080" stroke-width="1"/>
<path d="M31 148.2 L35.3 152.8" stroke="#808080" stroke-width="1.8" fill="none"/>
<rect x="40.5" y="136.5" width="50" height="19" fill="#fff" stroke="#7a7a7a" stroke-width="1"/>
<text x="42.4" y="149.8" font-family="Liberation Sans" font-size="12.3" fill="#111" textLength="46.4" lengthAdjust="spacingAndGlyphs">HDC600</text>
<circle cx="100.7" cy="145.6" r="7.4" fill="url(#bb)" stroke="#4a86c8" stroke-width="1"/><rect x="96.7" y="144.6" width="8" height="2" fill="#1458b0"/><rect x="99.7" y="141.6" width="2" height="8" fill="#1458b0"/>
<circle cx="122.8" cy="145.6" r="7.4" fill="url(#bb)" stroke="#4a86c8" stroke-width="1"/><rect x="118.8" y="144.6" width="8" height="2" fill="#1458b0"/>
<path d="M141.6 144.2 H150.4 V151 L148 153.4 H141.6 Z" fill="#f2f2f2" stroke="#c4c4c4" stroke-width="1"/><path d="M137.5 138.5 H144.5 V147.3 H135.5 V140.5 Z" fill="url(#pg)" stroke="#4a80c4" stroke-width="1.1"/><path d="M135.5 140.7 H137.6 V138.6" fill="none" stroke="#4a80c4" stroke-width="0.9"/><path d="M146 139.2 H149 V141.6" fill="none" stroke="#181818" stroke-width="1.4"/><path d="M146.8 141.2 H151.2 L149 144 Z" fill="#181818"/>
<path d="M156.6 144.2 H165.4 V153.4 H159 L156.6 151 Z" fill="#f2f2f2" stroke="#c4c4c4" stroke-width="1"/><path d="M162.5 138.5 H169.5 L171.5 140.5 V147.3 H162.5 Z" fill="url(#pg)" stroke="#4a80c4" stroke-width="1.1"/><path d="M171.5 140.7 H169.4 V138.6" fill="none" stroke="#4a80c4" stroke-width="0.9"/><path d="M161 139.2 H158 V141.6" fill="none" stroke="#181818" stroke-width="1.4"/><path d="M155.8 141.2 H160.2 L158 144 Z" fill="#181818"/>
<rect x="178.8" y="138.8" width="33.4" height="13.4" fill="#f0f0f0" stroke="#8a8a8a" stroke-width="1.6"/><rect x="180" y="140" width="16" height="11.5" fill="#fff"/><rect x="182.2" y="141.2" width="10.6" height="9.3" fill="#80e000" stroke="#000" stroke-width="1"/><path d="M196.5 151.5 H210.5 V140.5" stroke="#7a7a7a" stroke-width="1" fill="none"/><path d="M200 144 H207 L203.5 147.5 Z" fill="#000"/>
<rect x="216.8" y="138.8" width="33.4" height="13.4" fill="#f0f0f0" stroke="#8a8a8a" stroke-width="1.6"/><rect x="218" y="140" width="16" height="11.5" fill="#fff"/><rect x="220.2" y="141.2" width="10.6" height="9.3" fill="#ff0000" stroke="#000" stroke-width="1"/><path d="M234.5 151.5 H248.5 V140.5" stroke="#7a7a7a" stroke-width="1" fill="none"/><path d="M238 144 H245 L241.5 147.5 Z" fill="#000"/>
<rect x="257.3" y="138.3" width="13.6" height="13.6" rx="2.5" fill="none" stroke="#e8502a" stroke-width="1.5"/>
<rect x="260" y="143.5" width="5.5" height="5" rx="1" fill="none" stroke="#e8502a" stroke-width="1.2"/><rect x="263" y="141" width="5.5" height="5" rx="1" fill="#fff" stroke="#e8502a" stroke-width="1.2"/>
<rect x="277.5" y="138.5" width="13" height="13.5" rx="2" fill="none" stroke="#9a9a9a" stroke-width="1.3"/>
<text x="279.2" y="150.3" font-family="Liberation Sans" font-size="17" fill="#9a9a9a" textLength="10" lengthAdjust="spacingAndGlyphs">a</text>
<rect x="296.6" y="137.8" width="12.8" height="14.6" rx="1.5" fill="#fff" stroke="#3a78c8" stroke-width="1.2"/>
<rect x="299" y="141" width="8" height="2.6" fill="#c0c0c0"/><rect x="299" y="146" width="8" height="2.6" fill="#c0c0c0"/>
<text x="314.8" y="150" font-family="Liberation Sans" font-weight="bold" font-size="14" fill="#00c4c8" stroke="#00c4c8" stroke-width="0.3" textLength="15.3" lengthAdjust="spacingAndGlyphs">CR</text>
<rect x="334.5" y="137.5" width="15" height="15" fill="#fff" stroke="#d0d0d0" stroke-width="1"/>
<path d="M337 150.3 H340.4 V148.6 C337.6 146.6 337.4 140.4 342 140.4 C346.6 140.4 346.4 146.6 343.6 148.6 V150.3 H347" fill="none" stroke="#858585" stroke-width="1.9"/>
<rect x="355" y="137" width="16" height="16" fill="#f0f0f0"/>
<circle cx="363" cy="145" r="7.3" fill="#f4f4f4" stroke="#505050" stroke-width="1.5"/>
<path d="M363.4 142.6 A3 3 0 1 1 360.4 146.4" fill="none" stroke="#484848" stroke-width="1.4"/><path d="M361.2 140.6 L364.6 142.6 L361.6 144.6 Z" fill="#484848"/>
</svg></div>
<div id="rpane" class="abs"><svg class="abs" style="left:0;top:26px" width="742" height="661" viewBox="772 160 742 661" font-family="Liberation Sans" font-weight="bold" font-size="13" fill="#000">
<polygon points="1241.6,782.5 1311,743.8 1353.5,821 1262.8,821" fill="#e6e6e6"/>
<circle cx="1207.5" cy="902.4" r="93.8" fill="#e6e6e6"/>
<rect x="1119.0" y="346.0" width="88.20000000000005" height="316.0" fill="#fff" stroke="#000" stroke-width="1.95"/>
<rect x="1067.0" y="362.02" width="52.0" height="1.95"/>
<rect x="772" y="379.27" width="347.0" height="1.95"/>
<rect x="772" y="396.77" width="347.0" height="1.95"/>
<rect x="1067.0" y="414.02" width="52.0" height="1.95"/>
<rect x="772" y="433.02" width="347.0" height="1.95"/>
<rect x="772" y="450.32" width="347.0" height="1.95"/>
<rect x="1067.0" y="467.72" width="52.0" height="1.95"/>
<rect x="772" y="484.92" width="347.0" height="1.95"/>
<rect x="772" y="502.02" width="347.0" height="1.95"/>
<rect x="1067.0" y="521.32" width="52.0" height="1.95"/>
<rect x="772" y="538.92" width="347.0" height="1.95"/>
<rect x="772" y="556.12" width="347.0" height="1.95"/>
<rect x="1067.0" y="573.52" width="52.0" height="1.95"/>
<rect x="1101.7" y="590.82" width="17.299999999999955" height="1.95"/>
<rect x="978.5" y="607.82" width="140.5" height="1.95"/>
<rect x="978.5" y="626.92" width="140.5" height="1.95"/>
<rect x="978.5" y="643.82" width="140.5" height="1.95"/>
<circle cx="1067.0" cy="415.0" r="2.4"/>
<circle cx="1067.0" cy="468.7" r="3.0"/>
<circle cx="1067.0" cy="522.3" r="2.4"/>
<circle cx="1067.0" cy="574.5" r="3.0"/>
<rect x="1066.03" y="362.025" width="1.95" height="336.25"/>
<rect x="1207.2" y="362.02" width="53.59999999999991" height="1.95"/>
<rect x="1207.2" y="379.27" width="305.79999999999995" height="1.95"/>
<rect x="1207.2" y="396.77" width="305.79999999999995" height="1.95"/>
<rect x="1207.2" y="414.02" width="305.79999999999995" height="1.95"/>
<rect x="1207.2" y="433.02" width="17.0" height="1.95"/>
<rect x="1207.2" y="450.32" width="228.5999999999999" height="1.95"/>
<rect x="1207.2" y="467.72" width="305.79999999999995" height="1.95"/>
<rect x="1207.2" y="484.92" width="305.79999999999995" height="1.95"/>
<rect x="1207.2" y="502.02" width="305.79999999999995" height="1.95"/>
<rect x="1207.2" y="521.32" width="305.79999999999995" height="1.95"/>
<rect x="1207.2" y="538.92" width="305.79999999999995" height="1.95"/>
<rect x="1207.2" y="556.12" width="305.79999999999995" height="1.95"/>
<rect x="1207.2" y="573.52" width="53.59999999999991" height="1.95"/>
<rect x="1207.2" y="590.82" width="17.0" height="1.95"/>
<rect x="1207.2" y="607.82" width="141.79999999999995" height="1.95"/>
<rect x="1207.2" y="626.92" width="141.79999999999995" height="1.95"/>
<rect x="1207.2" y="643.82" width="141.79999999999995" height="1.95"/>
<circle cx="1435.8" cy="451.3" r="2.6"/>
<circle cx="1260.8" cy="574.5" r="2.8"/>
<circle cx="1349.0" cy="627.9" r="2.4"/>
<circle cx="978.5" cy="627.9" r="3.0"/>
<circle cx="1349.0" cy="608.8" r="1.5"/>
<circle cx="978.5" cy="608.8" r="2.3"/>
<rect x="1259.83" y="362.025" width="1.95" height="458.975"/>
<rect x="1067.0" y="696.32" width="193.79999999999995" height="1.95"/>
<circle cx="1260.8" cy="697.3" r="2.8"/>
<rect x="1135.03" y="662.0" width="1.95" height="35.299999999999955"/>
<circle cx="1136.0" cy="697.3" r="1.8"/>
<rect x="1154.33" y="662.0" width="1.95" height="35.299999999999955"/>
<circle cx="1155.3" cy="697.3" r="2.4"/>
<rect x="1171.73" y="662.0" width="1.95" height="35.299999999999955"/>
<circle cx="1172.7" cy="697.3" r="2.4"/>
<rect x="1188.93" y="662.0" width="1.95" height="35.299999999999955"/>
<circle cx="1189.9" cy="697.3" r="2.4"/>
<rect x="977.52" y="257.5" width="1.95" height="388.275"/>
<rect x="961.2" y="256.50" width="35.0" height="2"/>
<rect x="1348.03" y="274.5" width="1.95" height="371.275"/>
<rect x="1330" y="273.50" width="36.5" height="2"/>
<rect x="1434.83" y="257.5" width="1.95" height="468.1"/>
<rect x="1418.2" y="256.50" width="36.799999999999955" height="2"/>
<rect x="1434.83" y="738.8" width="1.95" height="82.20000000000005"/>
<rect x="1422" y="724.60" width="29" height="2"/>
<rect x="1422" y="737.80" width="29" height="2"/>
<rect x="1506.5" y="221.50" width="7.5" height="2"/>
<text x="938" y="248.5">ELVSS_-4.9V</text>
<text x="1310" y="266">ELVDD_4.6V</text>
<text x="1385" y="248.5">VREG_1P8_LCD</text>
<text x="1471.5" y="213.7">VREG_1P8</text>
<rect x="1138.5" y="301.5" width="64" height="24" fill="#a0a0ff" stroke="#8888d8" stroke-width="1"/>
<text x="1146" y="319" fill="#000078">HDC600</text>
<text x="1119.3" y="336.2">AXE834124AW1</text>
<text x="1115.4" y="359.0" text-anchor="end" font-size="13">1</text>
<text x="1123.1" y="359.0" font-size="13">1</text>
<text x="1203.4" y="359.0" text-anchor="end" font-size="13">2</text>
<text x="1210.1" y="359.0" font-size="13">2</text>
<text x="1115.4" y="376.3" text-anchor="end" font-size="13">3</text>
<text x="1123.1" y="376.3" font-size="13">3</text>
<text x="1203.4" y="376.3" text-anchor="end" font-size="13">4</text>
<text x="1210.1" y="376.3" font-size="13">4</text>
<text x="1115.4" y="393.5" text-anchor="end" font-size="13">5</text>
<text x="1123.1" y="393.5" font-size="13">5</text>
<text x="1203.4" y="393.5" text-anchor="end" font-size="13">6</text>
<text x="1210.1" y="393.5" font-size="13">6</text>
<text x="1115.4" y="412.7" text-anchor="end" font-size="13">7</text>
<text x="1123.1" y="412.7" font-size="13">7</text>
<text x="1203.4" y="412.7" text-anchor="end" font-size="13">8</text>
<text x="1210.1" y="412.7" font-size="13">8</text>
<text x="1115.4" y="430.0" text-anchor="end" font-size="13">9</text>
<text x="1123.1" y="430.0" font-size="13">9</text>
<text x="1203.4" y="430.0" text-anchor="end" font-size="13">10</text>
<text x="1210.1" y="430.0" font-size="13">10</text>
<text x="1115.4" y="447.2" text-anchor="end" font-size="13">11</text>
<text x="1123.1" y="447.2" font-size="13">11</text>
<text x="1203.4" y="447.2" text-anchor="end" font-size="13">12</text>
<text x="1210.1" y="447.2" font-size="13">12</text>
<text x="1115.4" y="467.7" text-anchor="end" font-size="13">13</text>
<text x="1123.1" y="464.4" font-size="13">13</text>
<text x="1203.4" y="464.4" text-anchor="end" font-size="13">14</text>
<text x="1210.1" y="467.7" font-size="13">14</text>
<text x="1115.4" y="484.9" text-anchor="end" font-size="13">15</text>
<text x="1123.1" y="481.6" font-size="13">15</text>
<text x="1203.4" y="481.6" text-anchor="end" font-size="13">16</text>
<text x="1210.1" y="484.9" font-size="13">16</text>
<text x="1115.4" y="502.2" text-anchor="end" font-size="13">17</text>
<text x="1123.1" y="500.8" font-size="13">17</text>
<text x="1203.4" y="500.8" text-anchor="end" font-size="13">18</text>
<text x="1210.1" y="502.2" font-size="13">18</text>
<text x="1115.4" y="521.3" text-anchor="end" font-size="13">19</text>
<text x="1123.1" y="518.0" font-size="13">19</text>
<text x="1203.4" y="518.0" text-anchor="end" font-size="13">20</text>
<text x="1210.1" y="521.3" font-size="13">20</text>
<text x="1115.4" y="539.0" text-anchor="end" font-size="13">21</text>
<text x="1123.1" y="535.5" font-size="13">21</text>
<text x="1203.4" y="535.5" text-anchor="end" font-size="13">22</text>
<text x="1210.1" y="539.0" font-size="13">22</text>
<text x="1115.4" y="556.1" text-anchor="end" font-size="13">23</text>
<text x="1123.1" y="552.7" font-size="13">23</text>
<text x="1203.4" y="552.7" text-anchor="end" font-size="13">24</text>
<text x="1210.1" y="556.1" font-size="13">24</text>
<text x="1115.4" y="573.5" text-anchor="end" font-size="13">25</text>
<text x="1123.1" y="570.2" font-size="13">25</text>
<text x="1203.4" y="570.2" text-anchor="end" font-size="13">26</text>
<text x="1210.1" y="573.5" font-size="13">26</text>
<text x="1115.4" y="591.0" text-anchor="end" font-size="13">27</text>
<text x="1123.1" y="587.6" font-size="13">27</text>
<text x="1203.4" y="587.6" text-anchor="end" font-size="13">28</text>
<text x="1210.1" y="591.0" font-size="13">28</text>
<text x="1115.4" y="608.0" text-anchor="end" font-size="13">29</text>
<text x="1123.1" y="606.7" font-size="13">29</text>
<text x="1203.4" y="606.7" text-anchor="end" font-size="13">30</text>
<text x="1210.1" y="608.0" font-size="13">30</text>
<text x="1115.4" y="627.0" text-anchor="end" font-size="13">31</text>
<text x="1123.1" y="623.9" font-size="13">31</text>
<text x="1203.4" y="623.9" text-anchor="end" font-size="13">32</text>
<text x="1210.1" y="627.0" font-size="13">32</text>
<text x="1115.4" y="644.2" text-anchor="end" font-size="13">33</text>
<text x="1123.1" y="641.2" font-size="13">33</text>
<text x="1203.4" y="641.2" text-anchor="end" font-size="13">34</text>
<text x="1210.1" y="644.2" font-size="13">34</text>
<text x="1121.5" y="656.4">NC</text>
<text x="1142.5" y="656.4">NC</text>
<text x="1157" y="656.4">NC</text>
<text x="1178.8" y="656.4">NC</text>
<text x="1135.2" y="675.6" text-anchor="end" font-size="13">35</text>
<text x="1154.6" y="675.6" text-anchor="end" font-size="13">36</text>
<text x="1172" y="675.6" text-anchor="end" font-size="13">37</text>
<text x="1189.2" y="675.6" text-anchor="end" font-size="13">38</text>
<text transform="translate(1428.4 713.6) rotate(-90)" font-size="13.8" >100nF</text>
<text transform="translate(1455.3 713.6) rotate(-90)" font-size="13.5" >6.3V</text>
<text transform="translate(1432 784.7) rotate(-90)" font-size="13.5" >C602</text>
<text transform="translate(1448.2 777.7) rotate(-90)" font-size="8.7" >0603</text>
<text transform="translate(1517 713.6) rotate(-90)" font-size="13.8" >100nF</text>
<text transform="translate(1520.5 784.7) rotate(-90)" font-size="13.5" >C603</text>
<rect x="1510.5" y="724.60" width="3.5" height="2"/>
<rect x="1510.5" y="737.80" width="3.5" height="2"/>
<clipPath id="cp820"><rect x="772" y="160" width="742" height="660"/></clipPath><g font-size="106" clip-path="url(#cp820)"><path d="M772.8 777.9 H782.2 L780.8 804.5 Q780.7 805.5 779.7 805.5 H775.3 Q774.3 805.5 774.2 804.5 Z M797.8 777.9 H807.2 L805.8 804.5 Q805.7 805.5 804.7 805.5 H800.3 Q799.3 805.5 799.2 804.5 Z"/><text x="844.6" y="850.8">O</text><text x="927.9" y="850.8">C</text><text x="1003.3" y="850.8">T</text><text x="1068.6" y="850.8">A</text></g>
</svg>
<div class="abs" id="rtb" style="left:0;top:0;width:756px;height:27px;background:#fff;border-bottom:1px solid #dadada"><svg class="abs" style="left:0;top:0" width="756" height="27" viewBox="772 134 756 27" font-family="Liberation Sans" font-size="12">
<defs><linearGradient id="gold" x1="0" y1="0" x2="1" y2="0"><stop offset="0" stop-color="#f4dc88"/><stop offset="1" stop-color="#c89820"/></linearGradient><linearGradient id="fold" x1="0" y1="0" x2="1" y2="0"><stop offset="0" stop-color="#f8e4a0"/><stop offset="1" stop-color="#e0b040"/></linearGradient></defs>
<rect x="772" y="134" width="756" height="2.5" fill="#ececec"/>
<rect x="772" y="134" width="2" height="27" fill="#f0f0f0"/>
<path d="M779.4 140.4 H790.6 V153.5 H779.4 Z" fill="#f0cf74" stroke="#d8b050" stroke-width="0.7"/>
<path d="M785 142.8 H790.4 L792.9 145.3 V155 H785 Z" fill="#eef6f2" stroke="#7e9488" stroke-width="0.9"/>
<path d="M786.6 146.5 H791.2 M786.6 148.5 H791.2 M786.6 150.5 H791.2 M786.6 152.5 H791.2" stroke="#b8d0c4" stroke-width="0.8"/>
<path d="M779.2 140.6 L784.8 143.6 V156 L779.2 153.4 Z" fill="url(#fold)" stroke="#d0a848" stroke-width="0.7"/>
<path d="M808.6 146.2 H817.4 V153 L815 155.4 H808.6 Z" fill="#f2f2f2" stroke="#c4c4c4" stroke-width="1"/><path d="M804.5 140.5 H811.5 V149.3 H802.5 V142.5 Z" fill="url(#pg)" stroke="#4a80c4" stroke-width="1.1"/><path d="M802.5 142.7 H804.6 V140.6" fill="none" stroke="#4a80c4" stroke-width="0.9"/><path d="M813 141.2 H816 V143.6" fill="none" stroke="#181818" stroke-width="1.4"/><path d="M813.8 143.2 H818.2 L816 146 Z" fill="#181818"/>
<path d="M826.6 146.2 H835.4 V155.4 H829 L826.6 153 Z" fill="#f2f2f2" stroke="#c4c4c4" stroke-width="1"/><path d="M832.5 140.5 H839.5 L841.5 142.5 V149.3 H832.5 Z" fill="url(#pg)" stroke="#4a80c4" stroke-width="1.1"/><path d="M841.5 142.7 H839.4 V140.6" fill="none" stroke="#4a80c4" stroke-width="0.9"/><path d="M831 141.2 H828 V143.6" fill="none" stroke="#181818" stroke-width="1.4"/><path d="M825.8 143.2 H830.2 L828 146 Z" fill="#181818"/>
<rect x="848" y="139" width="1" height="18.5" fill="#8a8a8a"/>
<text x="856.6" y="152.8">Page:</text>
<path d="M894.5 157 V138.5 H933" stroke="#8a8a8a" stroke-width="1" fill="none"/>
<text x="923" y="152.8">9</text><text x="938.6" y="152.8">/</text><text x="947.3" y="152.8">9</text>
<path d="M967 147.8 L977.8 139.8 V155.8 Z" fill="url(#gold)" stroke="#b88a28" stroke-width="0.9"/>
<path d="M994 139.8 L1005 147.8 L994 155.8 Z" fill="#a0a0a0"/>
<rect x="1016.5" y="140.5" width="11.5" height="15" rx="1" fill="url(#pg)" stroke="#3a6eb5" stroke-width="1.1"/>
<path d="M1021 145.6 L1018.3 148 L1021 150.4 Z M1023.5 145.6 L1026.2 148 L1023.5 150.4 Z" fill="#2058a8"/>
<rect x="1039.4" y="140.5" width="13.2" height="15" rx="1" fill="url(#pg)" stroke="#3a6eb5" stroke-width="1.1"/>
<path d="M1044.2 144.6 L1046 142.8 L1047.8 144.6 Z M1044.2 151.4 L1046 153.2 L1047.8 151.4 Z M1042.8 146.2 L1041 148 L1042.8 149.8 Z M1049.2 146.2 L1051 148 L1049.2 149.8 Z" fill="#3a6eb5"/>
<circle cx="1069.8" cy="148" r="7.5" fill="url(#bb)" stroke="#4a86c8" stroke-width="1"/><rect x="1065.8" y="147" width="8" height="2" fill="#1458b0"/>
<circle cx="1093.8" cy="148" r="7.5" fill="url(#bb)" stroke="#4a86c8" stroke-width="1"/><rect x="1089.8" y="147" width="8" height="2" fill="#1458b0"/><rect x="1092.8" y="144" width="2" height="8" fill="#1458b0"/>
<rect x="1108" y="139" width="1" height="18.5" fill="#8a8a8a"/>
<text x="1116.6" y="152.8">Find:</text>
<path d="M1149.5 157 V138.5 H1308" stroke="#8a8a8a" stroke-width="1" fill="none"/>
<text x="1152.5" y="152.8">HDC600</text>
<defs><linearGradient id="gold2" x1="0" y1="0" x2="0" y2="1"><stop offset="0" stop-color="#e8c860"/><stop offset="0.5" stop-color="#f4e478"/><stop offset="1" stop-color="#d8b040"/></linearGradient></defs>
<rect x="1315.5" y="143" width="8" height="10.5" rx="1.2" fill="#eef3f8" stroke="#5a8ac0" stroke-width="1"/><path d="M1317.3 146.5 H1322 M1317.3 148.5 H1322 M1317.3 150.5 H1322" stroke="#8aa0c0" stroke-width="0.9"/>
<path d="M1321.6 148 L1329.6 140.4 V155.6 Z" fill="url(#gold2)" stroke="#b88a28" stroke-width="0.9"/>
<rect x="1346.5" y="143" width="8" height="10.5" rx="1.2" fill="#eef3f8" stroke="#5a8ac0" stroke-width="1"/><path d="M1348.3 146.5 H1353 M1348.3 148.5 H1353 M1348.3 150.5 H1353" stroke="#8aa0c0" stroke-width="0.9"/>
<path d="M1348.5 148 L1340.5 140.4 V155.6 Z" fill="url(#gold2)" stroke="#b88a28" stroke-width="0.9"/>
<text x="1363.9" y="154.9" font-size="15" fill="#9686ff">A</text>
<text x="1371.2" y="147.6" font-size="12" fill="#d010a0" textLength="6" lengthAdjust="spacingAndGlyphs">a</text>
</svg></div>
<div class="abs" style="left:742px;top:26.5px;width:13.2px;height:674px;background:#f0f0f0"></div>
<div class="abs" style="left:0;top:687px;width:756px;height:13px;background:#f0f0f0"></div>
<div class="abs" style="left:742px;top:601px;width:13.2px;height:17px;background:#cdcdcd"></div>
<div class="abs" style="left:408.5px;top:688.5px;width:77.5px;height:12px;background:#cdcdcd"></div>
<div class="abs" style="left:16px;top:687px;width:1px;height:13px;background:#d4d4d4"></div>
<svg class="abs" style="left:0;top:26px" width="756" height="674" viewBox="772 160 756 674"><g fill="none" stroke="#505050" stroke-width="1.7"><path d="M1518 172.8 L1521.5 168.2 L1525 172.8"/><path d="M1518 809 L1521.5 813.6 L1525 809"/><path d="M782.6 825 L778 828.5 L782.6 832"/><path d="M1502.6 825 L1507.2 828.5 L1502.6 832"/></g></svg></div>
<div id="wline" class="abs"></div>
<div id="status" class="abs"><svg class="abs" style="left:0;top:0" width="1520" height="20" viewBox="8 836.3 1520 20">
<g font-family="Liberation Serif" font-size="12" fill="#000" stroke="#000" stroke-width="0.35" ><text x="7.66" y="853" textLength="5.88" lengthAdjust="spacingAndGlyphs">V</text><text x="13.94" y="853">e</text><text x="20.60" y="853">r</text><text x="26.27" y="853">s</text><text x="32.93" y="853">i</text><text x="37.66" y="853" textLength="5.88" lengthAdjust="spacingAndGlyphs">o</text><text x="43.66" y="853" textLength="5.88" lengthAdjust="spacingAndGlyphs">n</text><text x="50.93" y="853">:</text><text x="55.66" y="853" textLength="5.88" lengthAdjust="spacingAndGlyphs">1</text><text x="63.10" y="853">.</text><text x="67.66" y="853" textLength="5.88" lengthAdjust="spacingAndGlyphs">0</text><text x="75.10" y="853">.</text><text x="79.66" y="853" textLength="5.88" lengthAdjust="spacingAndGlyphs">0</text><text x="87.10" y="853">.</text><text x="91.66" y="853" textLength="5.88" lengthAdjust="spacingAndGlyphs">4</text><text x="97.66" y="853" textLength="5.88" lengthAdjust="spacingAndGlyphs">8</text></g>
<g font-family="Liberation Serif" font-size="12" fill="#fff" stroke="#fff" stroke-width="0.3" ><text x="1305.66" y="853" textLength="5.88" lengthAdjust="spacingAndGlyphs">C</text><text x="1311.66" y="853" textLength="5.88" lengthAdjust="spacingAndGlyphs">o</text><text x="1317.66" y="853" textLength="5.88" lengthAdjust="spacingAndGlyphs">m</text><text x="1323.66" y="853" textLength="5.88" lengthAdjust="spacingAndGlyphs">p</text><text x="1329.66" y="853" textLength="5.88" lengthAdjust="spacingAndGlyphs">o</text><text x="1335.66" y="853" textLength="5.88" lengthAdjust="spacingAndGlyphs">n</text><text x="1341.94" y="853">e</text><text x="1347.66" y="853" textLength="5.88" lengthAdjust="spacingAndGlyphs">n</text><text x="1354.93" y="853">t</text><text x="1360.93" y="853">:</text><text x="1365.66" y="853" textLength="5.88" lengthAdjust="spacingAndGlyphs">H</text><text x="1371.66" y="853" textLength="5.88" lengthAdjust="spacingAndGlyphs">D</text><text x="1377.66" y="853" textLength="5.88" lengthAdjust="spacingAndGlyphs">C</text><text x="1383.66" y="853" textLength="5.88" lengthAdjust="spacingAndGlyphs">6</text><text x="1389.66" y="853" textLength="5.88" lengthAdjust="spacingAndGlyphs">0</text><text x="1395.66" y="853" textLength="5.88" lengthAdjust="spacingAndGlyphs">0</text><text x="1407.66" y="853" textLength="5.88" lengthAdjust="spacingAndGlyphs">M</text><text x="1413.66" y="853" textLength="5.88" lengthAdjust="spacingAndGlyphs">o</text><text x="1419.66" y="853" textLength="5.88" lengthAdjust="spacingAndGlyphs">d</text><text x="1425.94" y="853">e</text><text x="1432.93" y="853">l</text><text x="1438.93" y="853">:</text><text x="1443.66" y="853" textLength="5.88" lengthAdjust="spacingAndGlyphs">F</text><text x="1449.66" y="853" textLength="5.88" lengthAdjust="spacingAndGlyphs">3</text><text x="1455.66" y="853" textLength="5.88" lengthAdjust="spacingAndGlyphs">8</text><text x="1462.60" y="853">-</text><text x="1467.66" y="853" textLength="5.88" lengthAdjust="spacingAndGlyphs">1</text><text x="1473.66" y="853" textLength="5.88" lengthAdjust="spacingAndGlyphs">4</text><text x="1485.66" y="853" textLength="5.88" lengthAdjust="spacingAndGlyphs">P</text><text x="1492.93" y="853">i</text><text x="1497.66" y="853" textLength="5.88" lengthAdjust="spacingAndGlyphs">n</text><text x="1504.93" y="853">:</text><text x="1509.66" y="853" textLength="5.88" lengthAdjust="spacingAndGlyphs">2</text><text x="1515.66" y="853" textLength="5.88" lengthAdjust="spacingAndGlyphs">3</text></g>
</svg></div>
<svg class="abs" style="left:0;top:490px" width="5" height="8" viewBox="0 0 5 8"><path d="M0 0.5 L4 4 L0 7.5 Z" fill="#f01010"/></svg>
</div>
</body></html>
